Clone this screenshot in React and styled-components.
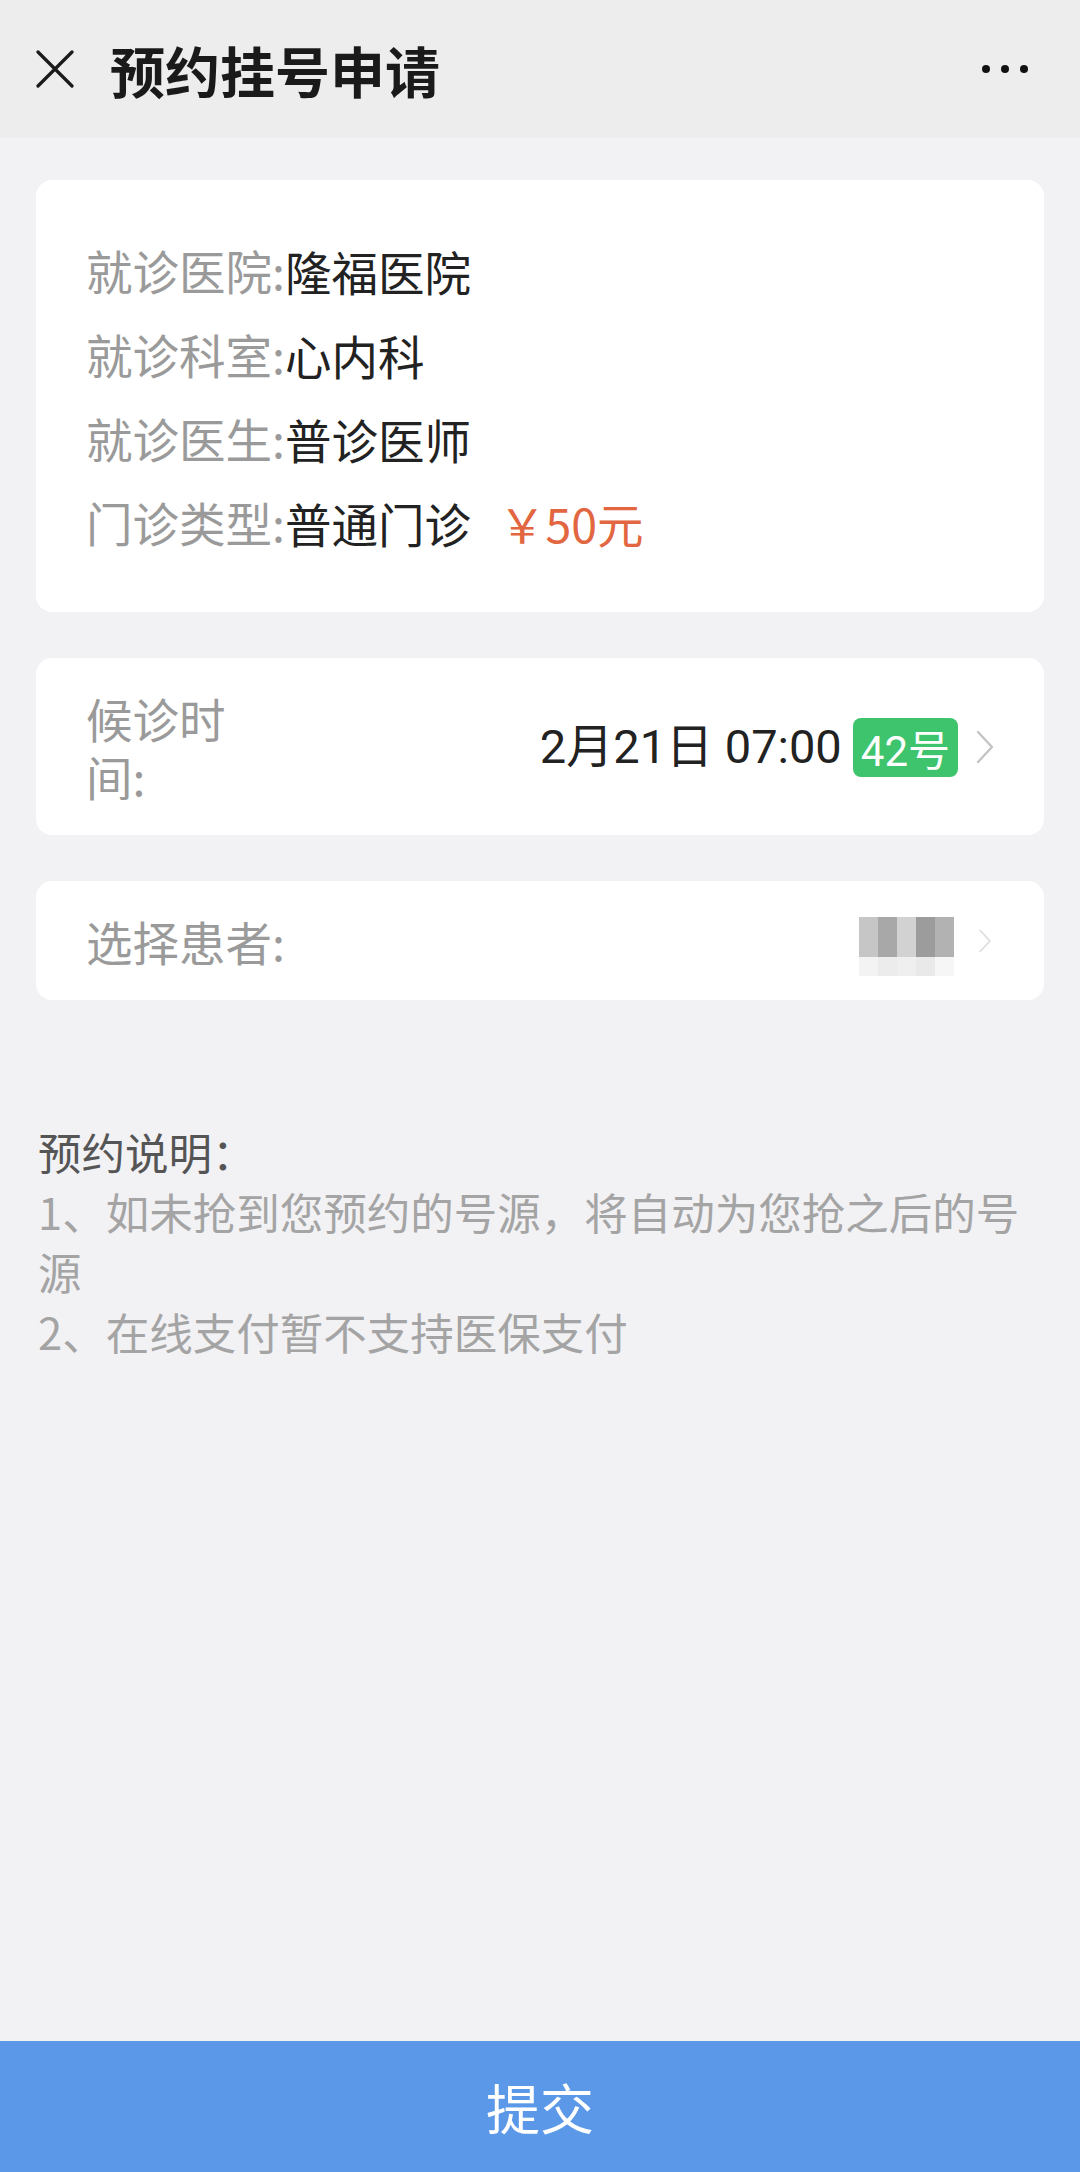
import styled, { createGlobalStyle } from "styled-components"

const GlobalStyle = createGlobalStyle`
  html, body {
    margin: 0;
    padding: 0;
    background-color: #f2f2f5;
  }

  body {
    font-family: "Noto Sans CJK SC", "Noto Sans", sans-serif;
  }
`

const infoRows = [
  { label: "就诊医院:", value: "隆福医院" },
  { label: "就诊科室:", value: "心内科" },
  { label: "就诊医生:", value: "普诊医师" },
  { label: "门诊类型:", value: "普通门诊", price: "￥50元" },
]

const mosaicTop = ["#c6c6c6", "#a8a8a8", "#d2d2d2", "#9c9c9c", "#b2b2b2"]
const mosaicBottom = ["#f3f3f3", "#ececec", "#efefef", "#e9e9e9", "#f6f6f6"]

const CloseIcon = () => (
  <svg width="38" height="38" viewBox="0 0 38 38">
    <path d="M2 2 L36 36 M36 2 L2 36" stroke="#1a1a1a" strokeWidth="3.2" strokeLinecap="round" />
  </svg>
)

const Chevron = ({ faint }) => (
  <ChevronBox faint={faint}>
    <svg width="18" height="34" viewBox="0 0 18 34">
      <path d="M2 2 L16 17 L2 32" fill="none" stroke="currentColor" strokeWidth="2.4" strokeLinecap="round" strokeLinejoin="round" />
    </svg>
  </ChevronBox>
)

const App = () => {
  return (
    <Page>
      <GlobalStyle />
      <TopBar>
        <CloseIcon />
        <PageTitle>预约挂号申请</PageTitle>
        <MoreDots>
          <Dot />
          <Dot />
          <Dot />
        </MoreDots>
      </TopBar>

      <Content>
        <InfoCard>
          {infoRows.map((row) => (
            <InfoRow key={row.label}>
              <Label>{row.label}</Label>
              <Value>{row.value}</Value>
              {row.price && <Price>{row.price}</Price>}
            </InfoRow>
          ))}
        </InfoCard>

        <SelectCard>
          <Label width="156px">候诊时间:</Label>
          <SelectRight>
            <DateText>2月21日 07:00</DateText>
            <NumberBadge>42号</NumberBadge>
            <Chevron />
          </SelectRight>
        </SelectCard>

        <SelectCard>
          <Label>选择患者:</Label>
          <SelectRight>
            <Mosaic>
              {mosaicTop.map((c, i) => (
                <MosaicCell key={"t" + i} color={c} />
              ))}
              {mosaicBottom.map((c, i) => (
                <MosaicCell key={"b" + i} color={c} />
              ))}
            </Mosaic>
            <Chevron faint />
          </SelectRight>
        </SelectCard>

        <Notes>
          <NotesTitle>预约说明：</NotesTitle>
          <NoteLine>1、如未抢到您预约的号源，将自动为您抢之后的号源</NoteLine>
          <NoteLine>2、在线支付暂不支持医保支付</NoteLine>
        </Notes>
      </Content>

      <SubmitButton>提交</SubmitButton>
    </Page>
  )
}

export default App

const Page = styled.div`
  display: flex;
  flex-direction: column;
  min-height: 2172px;
`

const TopBar = styled.header`
  background-color: #ededed;

  display: flex;
  align-items: center;

  height: 138px;
  padding: 0 52px 0 36px;
  box-sizing: border-box;
`

const PageTitle = styled.h1`
  margin: 0 0 0 36px;

  color: #1a1a1a;
  font-size: 55px;
  font-weight: 600;
  line-height: 1;
`

const MoreDots = styled.div`
  display: flex;
  align-items: center;
  gap: 11px;

  margin-left: auto;
`

const Dot = styled.span`
  width: 8px;
  height: 8px;

  background-color: #111;
  border-radius: 50%;
`

const Content = styled.main`
  display: flex;
  flex-direction: column;
  gap: 46px;

  padding: 42px 36px 0;
`

const Card = styled.section`
  background-color: #ffffff;
  border-radius: 16px;
`

const InfoCard = styled(Card)`
  padding: 48px 50px;
`

const InfoRow = styled.div`
  display: flex;
  align-items: center;

  height: 84px;
  font-size: 46.5px;
`

const Label = styled.span`
  flex-shrink: 0;

  width: ${(props) => props.width || "auto"};

  color: #9a9a9a;
  font-size: 46.5px;
  line-height: 58px;
`

const Value = styled.span`
  color: #222;
`

const Price = styled.span`
  margin-left: 28px;

  color: #e2663f;
`

const SelectCard = styled(Card)`
  display: flex;
  align-items: center;

  padding: 31px 50px 30px;
`

const SelectRight = styled.div`
  display: flex;
  align-items: center;

  margin-left: auto;
`

const DateText = styled.span`
  color: #222;
  font-family: "Roboto", "Noto Sans CJK SC", sans-serif;
  font-size: 47px;
  line-height: 58px;
`

const NumberBadge = styled.span`
  display: flex;
  align-items: center;
  justify-content: center;

  height: 59px;
  margin-left: 11px;
  padding: 0 8px;

  background-color: #3dc46c;
  color: #ffffff;
  border-radius: 8px;

  font-family: "Roboto", "Noto Sans CJK SC", sans-serif;
  font-size: 42px;
`

const ChevronBox = styled.span`
  display: flex;

  margin-left: ${(props) => (props.faint ? "22px" : "18px")};

  color: ${(props) => (props.faint ? "#dcdcdc" : "#c4c4c4")};
  transform: ${(props) => (props.faint ? "scale(0.7)" : "none")};
`

const Mosaic = styled.div`
  display: grid;
  grid-template-columns: repeat(5, 19px);
  grid-template-rows: 40px 19px;

  margin: 5px 0 -6px;
`

const MosaicCell = styled.span`
  background-color: ${(props) => props.color};
`

const Notes = styled.section`
  margin-top: 76px;
  padding-left: 2px;

  font-size: 43.5px;
  line-height: 60px;
`

const NotesTitle = styled.div`
  color: #555;
`

const NoteLine = styled.div`
  color: #a4a4a4;
`

const SubmitButton = styled.button`
  display: flex;
  align-items: center;
  justify-content: center;

  width: 100%;
  height: 131px;
  margin-top: auto;

  background-color: #5b99e8;
  color: #ffffff;
  border: none;

  font-family: "Noto Sans CJK SC", sans-serif;
  font-size: 54px;

  cursor: pointer;
`
